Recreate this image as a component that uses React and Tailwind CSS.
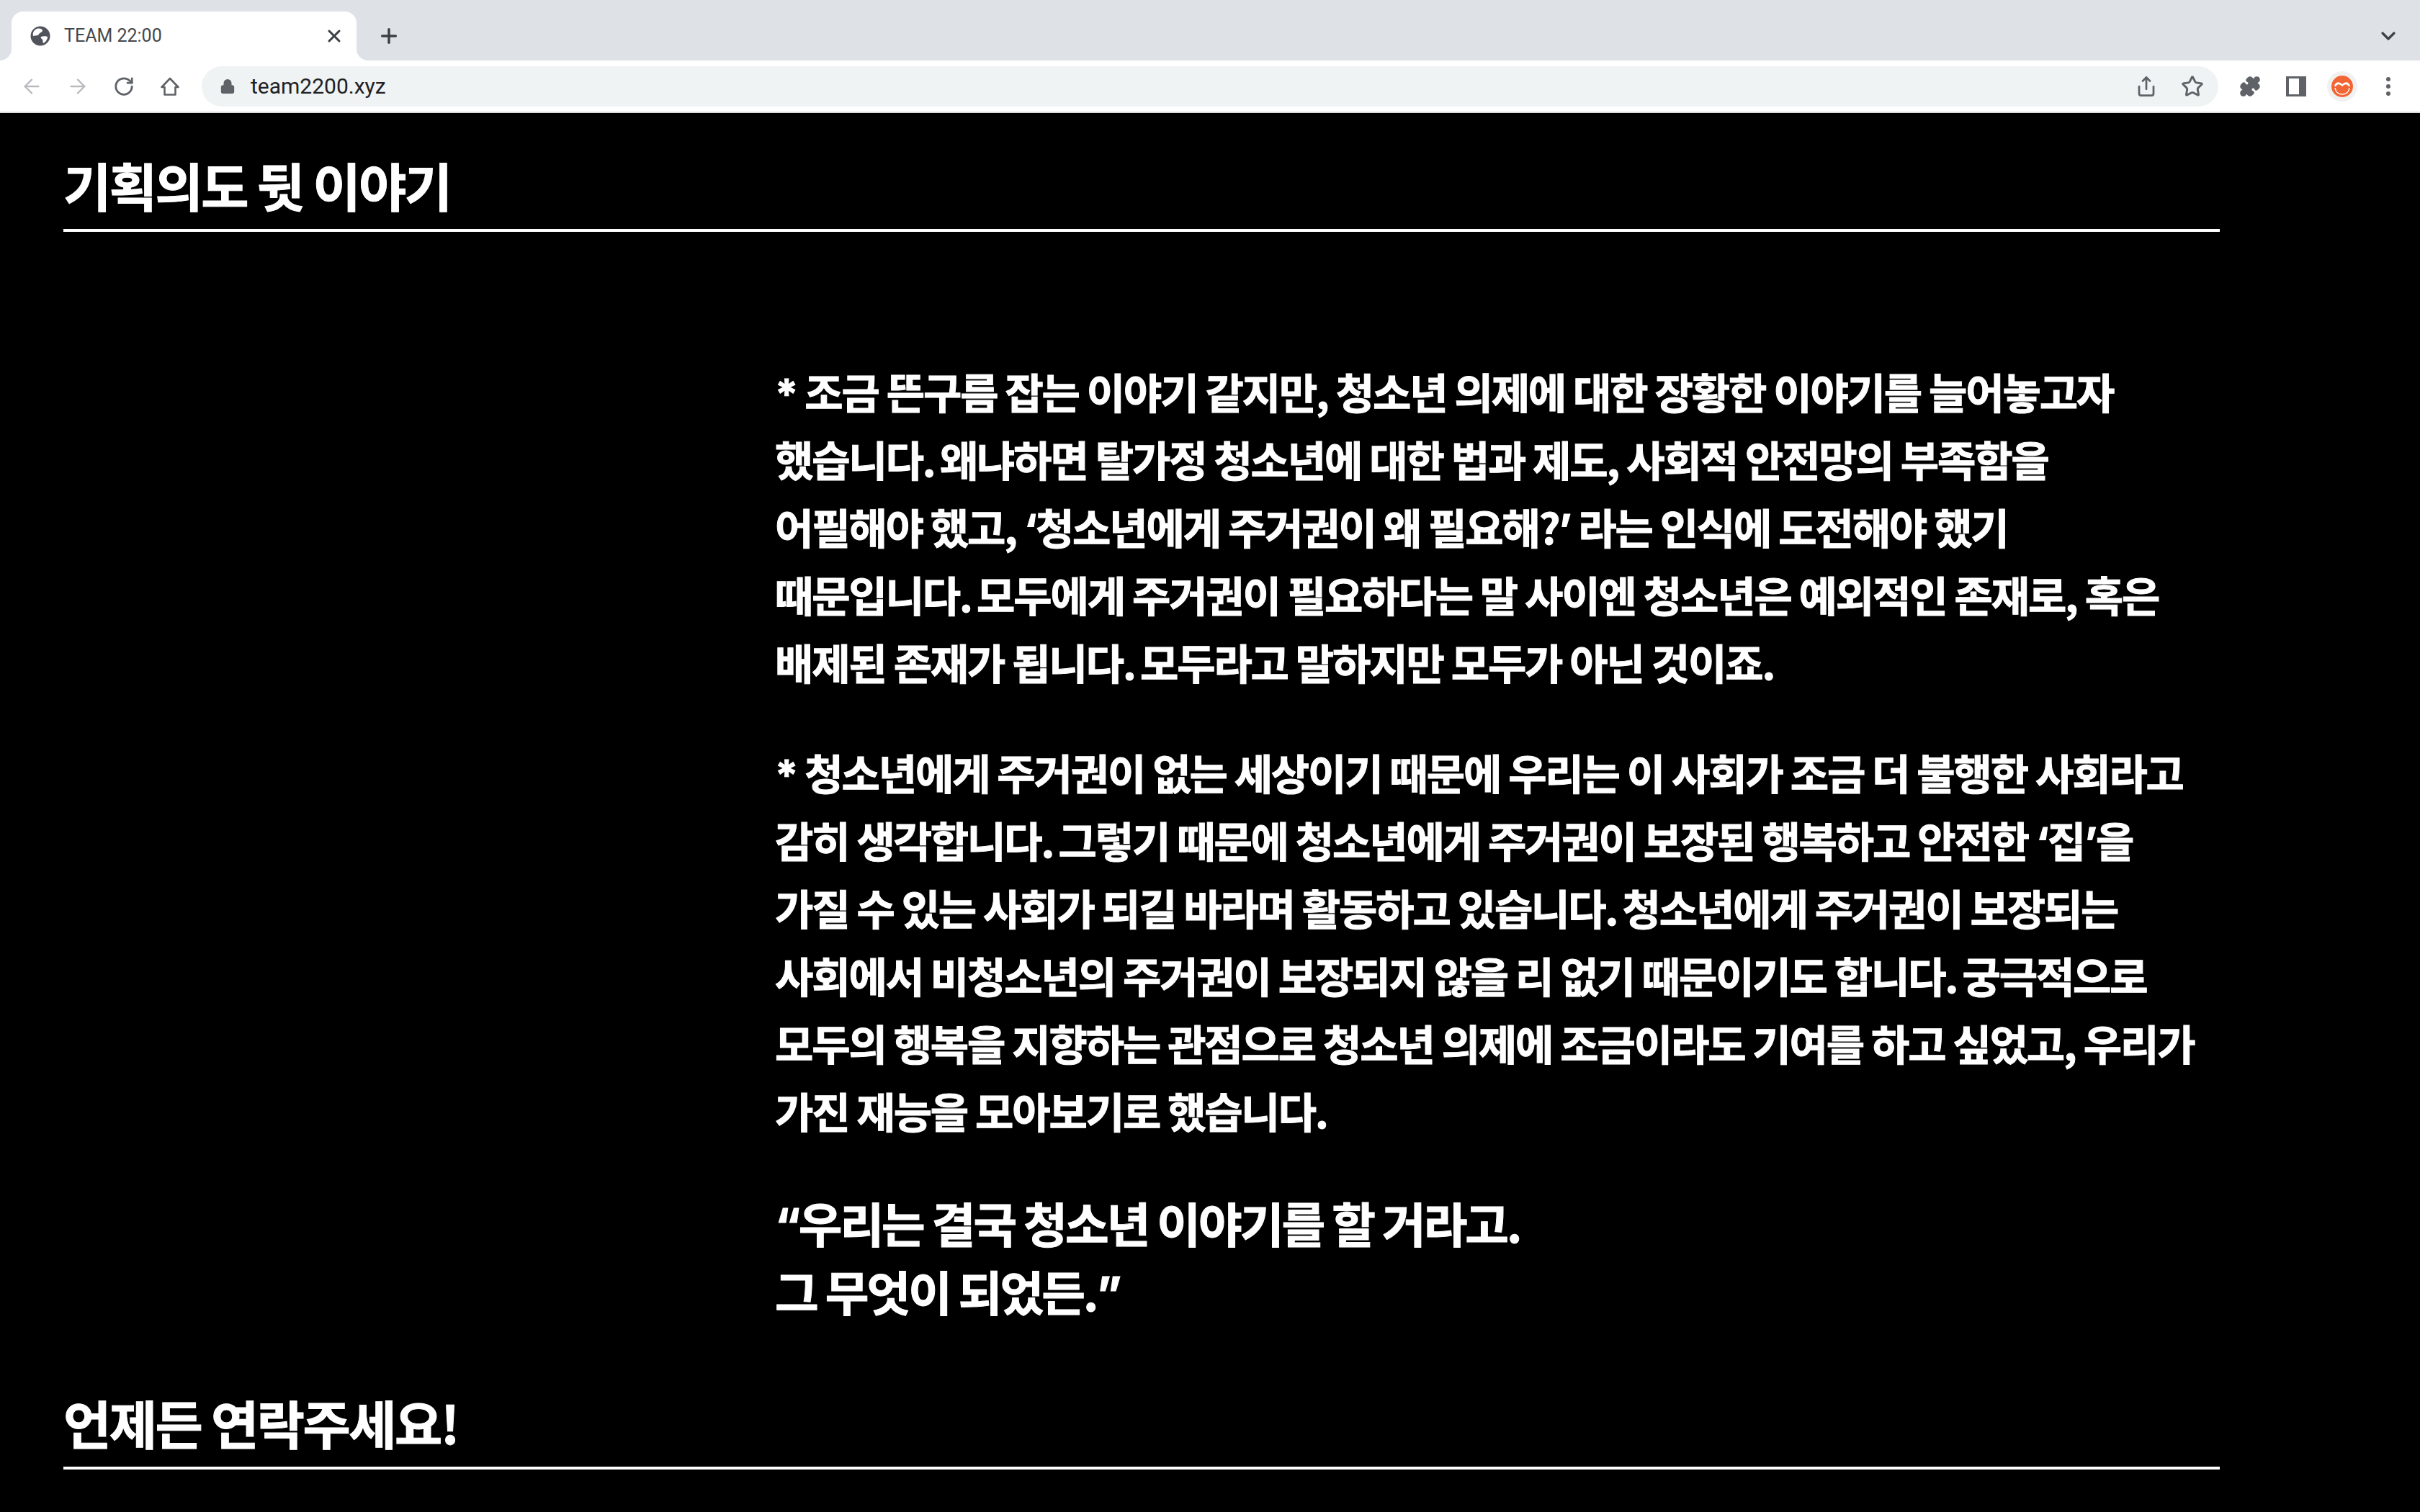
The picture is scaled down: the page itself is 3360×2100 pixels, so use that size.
import React from "react";
import { ArrowLeft, ArrowRight, RotateCw, Lock, X, Plus, ChevronDown, Star, Puzzle, Share } from "lucide-react";

const FONT = "font-['Noto_Sans_CJK_KR','Noto_Sans',sans-serif]";

const para1 = [
  "* 조금 뜬구름 잡는 이야기 같지만, 청소년 의제에 대한 장황한 이야기를 늘어놓고자",
  "했습니다. 왜냐하면 탈가정 청소년에 대한 법과 제도, 사회적 안전망의 부족함을",
  "어필해야 했고, ‘청소년에게 주거권이 왜 필요해?’ 라는 인식에 도전해야 했기",
  "때문입니다. 모두에게 주거권이 필요하다는 말 사이엔 청소년은 예외적인 존재로, 혹은",
  "배제된 존재가 됩니다. 모두라고 말하지만 모두가 아닌 것이죠.",
];

const para2 = [
  "* 청소년에게 주거권이 없는 세상이기 때문에 우리는 이 사회가 조금 더 불행한 사회라고",
  "감히 생각합니다. 그렇기 때문에 청소년에게 주거권이 보장된 행복하고 안전한 ‘집’을",
  "가질 수 있는 사회가 되길 바라며 활동하고 있습니다. 청소년에게 주거권이 보장되는",
  "사회에서 비청소년의 주거권이 보장되지 않을 리 없기 때문이기도 합니다. 궁극적으로",
  "모두의 행복을 지향하는 관점으로 청소년 의제에 조금이라도 기여를 하고 싶었고, 우리가",
  "가진 재능을 모아보기로 했습니다.",
];

// quotes and asterisk come from a latin face, the period before a space sits tighter
const Line = ({ text }) => (
  <span className="block whitespace-nowrap">
    {text.split(/([‘’“”*]|\. )/).map((part, i) => {
      if (part === ". ") return <span key={i} className="tracking-[-4px]">{part}</span>;
      if (/^[‘’“”*]$/.test(part)) return <span key={i} className="font-['Inter',sans-serif] leading-none">{part}</span>;
      return part;
    })}
  </span>
);

const Globe = () => (
  <svg width="28" height="28" viewBox="0 0 28 28">
    <circle cx="14" cy="14" r="13.5" fill="#50535a" />
    <path d="M9 4c4-1 8 0 8 2.500s-4 2.500-5 5-5 1.500-8 2.500C3 10 5 5.500 9 4zM15 15c3-1 7-1 9 0 0 4-3 8-6 9-1-3 0-4-1.500-5.500S14 16.500 15 15z" fill="#fff" />
  </svg>
);

const HomeIcon = () => (
  <svg width="28" height="28" viewBox="0 0 28 28" fill="none" stroke="#5f6368" strokeWidth="2.6" strokeLinejoin="round">
    <path d="M14 3 25.500 15H21.500V25.500H6.500V15H2.500Z" />
  </svg>
);

const Sidebar = () => (
  <svg width="28" height="28" viewBox="0 0 28 28">
    <path d="M0 0h28v28H0z M4 3v22h14V3z" fill="#5f6368" fillRule="evenodd" />
  </svg>
);

const Dots = () => (
  <svg width="8" height="28" viewBox="0 0 8 28" fill="#5f6368">
    <circle cx="4" cy="4" r="3" />
    <circle cx="4" cy="14" r="3" />
    <circle cx="4" cy="24" r="3" />
  </svg>
);

const Avatar = () => (
  <div className="flex h-[42px] w-[42px] items-center justify-center rounded-full bg-[#f1f1f1]">
    <svg width="30" height="30" viewBox="0 0 30 30">
      <circle cx="15" cy="15" r="15" fill="#f26535" />
      <path d="M4 14c2-6 7-6 11-2 4-4 9-4 11 2-1 2-2 1-3 0-2-3-5-2-8 1-3-3-6-4-8-1-1 1-2 2-3 0z" fill="#fff" />
      <path d="M5 17c1 6 5 9 10 9s9-3 10-9" fill="none" stroke="#fff" strokeWidth="1.500" />
    </svg>
  </div>
);

const ToolbarIcon = ({ children }) => (
  <div className="flex h-[64px] w-[64px] items-center justify-center">{children}</div>
);

const Chrome = () => (
  <div className="font-['Roboto',sans-serif]">
    <div className="flex h-[84px] items-end bg-[#dee1e6] pr-[28px]">
      <div className="h-[16px] w-[16px] bg-white">
        <div className="h-full w-full rounded-br-[16px] bg-[#dee1e6]" />
      </div>
      <div className="flex h-[68px] w-[479px] items-center rounded-t-[16px] bg-white pl-[26px] pr-[17px]">
        <Globe />
        <span className="ml-[19px] flex-1 text-[25px] text-[#45474b]">TEAM 22:00</span>
        <X size={28} strokeWidth={2.6} color="#3c4043" />
      </div>
      <div className="h-[16px] w-[16px] bg-white">
        <div className="h-full w-full rounded-bl-[16px] bg-[#dee1e6]" />
      </div>
      <div className="ml-[13px] flex h-[68px] items-center">
        <Plus size={32} strokeWidth={2.6} color="#3c4043" />
      </div>
      <div className="flex h-[68px] flex-1 items-center justify-end">
        <ChevronDown size={32} strokeWidth={2.4} color="#3c4043" />
      </div>
    </div>
    <div className="flex h-[73px] items-center border-b-[2px] border-[#dcdcdc] bg-white pl-[12px]">
      <ToolbarIcon><ArrowLeft size={32} strokeWidth={1.8} color="#b9bbbe" /></ToolbarIcon>
      <ToolbarIcon><ArrowRight size={32} strokeWidth={1.8} color="#b9bbbe" /></ToolbarIcon>
      <ToolbarIcon><RotateCw size={30} strokeWidth={2.2} color="#5f6368" /></ToolbarIcon>
      <ToolbarIcon><HomeIcon /></ToolbarIcon>
      <div className="ml-[12px] flex h-[56px] w-[2800px] items-center rounded-full bg-[#eff3f4] pl-[25px] pr-[20px]">
        <Lock size={22} fill="#5f6368" color="#5f6368" />
        <span className="ml-[21px] flex-1 text-[30px] text-[#202124]">team2200.xyz</span>
        <Share size={30} strokeWidth={2.2} color="#5f6368" />
        <Star size={32} strokeWidth={2.2} color="#5f6368" className="ml-[33px]" />
      </div>
      <div className="ml-[12px] flex items-center">
        <ToolbarIcon><Puzzle size={30} fill="#5f6368" color="#5f6368" /></ToolbarIcon>
        <ToolbarIcon><Sidebar /></ToolbarIcon>
        <ToolbarIcon><Avatar /></ToolbarIcon>
        <ToolbarIcon><Dots /></ToolbarIcon>
      </div>
    </div>
  </div>
);

const SectionTitle = ({ children, className }) => (
  <div className={className}>
    <h2 className="w-[2994px] border-b-[4px] border-white pb-[16px] text-[72px] leading-[92px] font-bold tracking-[-2.5px] text-white [-webkit-text-stroke:1px_white]">
      {children}
    </h2>
  </div>
);

const Paragraph = ({ lines, className }) => (
  <p className={`text-[58px] leading-[94px] font-bold tracking-[-2.15px] text-white [-webkit-text-stroke:1px_white] ${className}`}>
    {lines.map((line) => (
      <Line key={line} text={line} />
    ))}
  </p>
);

export default function App() {
  return (
    <div className={`h-[2100px] overflow-hidden bg-black ${FONT}`}>
      <Chrome />
      <main className="pl-[88px]">
        <SectionTitle className="pt-[53px]">기획의도 뒷 이야기</SectionTitle>
        <div className="pl-[988px] pt-[174px]">
          <Paragraph lines={para1} />
          <Paragraph lines={para2} className="mt-[59px]" />
          <p className="mt-[61px] text-[66px] leading-[95px] font-bold tracking-[-3px] text-white [-webkit-text-stroke:1px_white]">
            <Line text="“우리는 결국 청소년 이야기를 할 거라고." />
            <Line text="그 무엇이 되었든.”" />
          </p>
        </div>
        <SectionTitle className="pt-[89px]">언제든 연락주세요!</SectionTitle>
      </main>
    </div>
  );
}
